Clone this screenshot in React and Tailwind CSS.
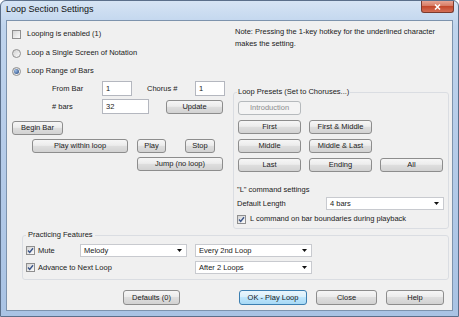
import React from "react";

const btnNormal =
  "border-[#8d8d8d] bg-[linear-gradient(#f6f6f6,#ececec_45%,#dedede_50%,#d2d2d2)] text-[#1a1a1a]";
const btnBase =
  "h-[14px] shrink-0 flex items-center justify-center rounded-[3px] border leading-none";

function Btn({ className = "", children, disabled, primary }) {
  let look = btnNormal;
  if (disabled) look = "border-[#b6babd] bg-[#f4f4f4] text-[#8d8d8d]";
  if (primary)
    look =
      "border-[#3c7fb1] bg-[linear-gradient(#eaf6fd,#d9f0fc_45%,#bee6fd_50%,#a7d9f5)] text-[#1a1a1a]";
  return <div className={`${btnBase} ${look} ${className}`}>{children}</div>;
}

function Check({ checked }) {
  return (
    <span className="w-[9px] h-[9px] shrink-0 border border-[#8f8f8f] bg-[linear-gradient(135deg,#d4d4d4,#fbfbfb)] flex items-center justify-center">
      {checked && (
        <svg width="7" height="7" viewBox="0 0 7 7">
          <path d="M1 3.6 L2.7 5.4 L6 1.2" stroke="#3a5488" strokeWidth="1.4" fill="none" />
        </svg>
      )}
    </span>
  );
}

function Radio({ selected }) {
  return (
    <span className="w-[9px] h-[9px] shrink-0 rounded-full border border-[#8f8f8f] bg-[linear-gradient(135deg,#d0d0d0,#fcfcfc)] flex items-center justify-center">
      {selected && (
        <span className="w-[5px] h-[5px] rounded-full bg-[radial-gradient(circle_at_35%_35%,#9dbde6,#1b3f78)]" />
      )}
    </span>
  );
}

function Field({ className = "", children }) {
  return (
    <div className={`h-[15px] shrink-0 border border-[#b4b7bf] bg-white flex items-center pl-[3px] ${className}`}>
      {children}
    </div>
  );
}

function Combo({ className = "", children }) {
  return (
    <div className={`h-[13px] shrink-0 border border-[#c8cacf] bg-white flex items-center justify-between pl-[3px] pr-[4px] ${className}`}>
      <span>{children}</span>
      <svg width="5" height="3" viewBox="0 0 5 3">
        <path d="M0 0H5L2.5 3Z" fill="#111" />
      </svg>
    </div>
  );
}

export default function App() {
  return (
    <div className="w-[459px] h-[317px] flex flex-col overflow-hidden rounded-t-[6px] border border-[#5b6f8a] bg-[linear-gradient(180deg,#d6e4f4,#bfd4ed_8%,#b6cce9_45%,#a9c3e4)] font-['Liberation_Sans',Arial,sans-serif]">
      <div className="h-[19px] shrink-0 flex justify-between items-start">
        <span className="pl-[5px] pt-[3px] text-[9px] leading-[11px] text-[#111]">Loop Section Settings</span>
        <div className="mr-[4px] w-[33px] h-[12px] rounded-b-[3px] border border-t-0 border-[#7a3a2e] bg-[linear-gradient(#e8a493,#d67a63_45%,#c4482b_50%,#d46f57)] flex items-center justify-center">
          <svg width="7" height="6" viewBox="0 0 7 6">
            <path d="M1 0.5 L6 5.5 M6 0.5 L1 5.5" stroke="#fff" strokeWidth="1.5" />
          </svg>
        </div>
      </div>

      <div className="ml-[5px] mr-[5px] h-[291px] shrink-0 border border-[#7d93ad] bg-[#f0f0f0] flex flex-col text-[7.5px] leading-[10px] text-[#1a1a1a]">
        <div className="flex pt-[5px]">
          {/* left column */}
          <div className="ml-[5px] w-[214px] mt-[3px] flex flex-col">
            <div className="h-[10px] flex items-center gap-[6px]">
              <Check />
              <span>Looping is enabled (1)</span>
            </div>
            <div className="mt-[9px] h-[10px] flex items-center gap-[6px]">
              <Radio />
              <span>Loop a Single Screen of Notation</span>
            </div>
            <div className="mt-[8px] h-[10px] flex items-center gap-[6px]">
              <Radio selected />
              <span>Loop Range of Bars</span>
            </div>
            <div className="mt-[5px] h-[15px] flex items-center">
              <span className="ml-[40px] w-[50px]">From Bar</span>
              <Field className="w-[30px]">1</Field>
              <span className="ml-[15px] w-[48px]">Chorus #</span>
              <Field className="w-[30px]">1</Field>
            </div>
            <div className="mt-[3px] h-[15px] flex items-center">
              <span className="ml-[40px] w-[50px]">&#35; bars</span>
              <Field className="w-[47px]">32</Field>
              <Btn className="ml-[17px] w-[57px]">Update</Btn>
            </div>
            <div className="mt-[7px] flex">
              <Btn className="w-[51px]">Begin Bar</Btn>
            </div>
            <div className="mt-[4px] flex">
              <Btn className="ml-[20px] w-[96px]">Play within loop</Btn>
              <Btn className="ml-[9px] w-[29px]">Play</Btn>
              <Btn className="ml-[19px] w-[30px]">Stop</Btn>
            </div>
            <div className="mt-[4px] flex">
              <Btn className="ml-[125px] w-[86px]">Jump (no loop)</Btn>
            </div>
          </div>

          {/* right column */}
          <div className="ml-[7px] w-[215px] flex flex-col">
            <div className="pl-[2px] leading-[12px] whitespace-nowrap">
              Note: Pressing the 1-key hotkey for the underlined character
              <br />
              makes the setting.
            </div>
            <fieldset className="mt-[37px] border border-[#dadde2] rounded-[3px] pl-[3px] pr-[4px] pb-[4px]">
              <legend className="px-[1px] leading-[10px]">Loop Presets (Set to Choruses...)</legend>
              <div className="mt-[4px] flex">
                <Btn disabled className="ml-[1px] w-[63px]">Introduction</Btn>
              </div>
              <div className="mt-[5px] flex gap-[8px] ml-[1px]">
                <Btn className="w-[63px]">First</Btn>
                <Btn className="w-[63px]">First &amp; Middle</Btn>
              </div>
              <div className="mt-[5px] flex gap-[8px] ml-[1px]">
                <Btn className="w-[63px]">Middle</Btn>
                <Btn className="w-[63px]">Middle &amp; Last</Btn>
              </div>
              <div className="mt-[5px] flex gap-[8px] ml-[1px]">
                <Btn className="w-[63px]">Last</Btn>
                <Btn className="w-[63px]">Ending</Btn>
                <Btn className="w-[63px]">All</Btn>
              </div>
              <div className="mt-[13px]">&quot;L&quot; command settings</div>
              <div className="mt-[2px] h-[13px] flex items-center">
                <span className="w-[89px]">Default Length</span>
                <Combo className="w-[118px]">4 bars</Combo>
              </div>
              <div className="mt-[4px] h-[10px] flex items-center gap-[4px]">
                <Check checked />
                <span>L command on bar boundaries during playback</span>
              </div>
            </fieldset>
          </div>
        </div>

        <fieldset className="mt-[1px] ml-[15px] w-[427px] border border-[#dadde2] rounded-[3px] pl-[3px] pb-[5px]">
          <legend className="px-[2px] leading-[10px]">Practicing Features</legend>
          <div className="mt-[4px] h-[13px] flex items-center">
            <div className="w-[54px] flex items-center gap-[3px]">
              <Check checked />
              <span>Mute</span>
            </div>
            <Combo className="w-[107px]">Melody</Combo>
            <Combo className="ml-[8px] w-[117px]">Every 2nd Loop</Combo>
          </div>
          <div className="mt-[4px] h-[13px] flex items-center">
            <div className="w-[169px] flex items-center gap-[3px]">
              <Check checked />
              <span>Advance to Next Loop</span>
            </div>
            <Combo className="w-[117px]">After 2 Loops</Combo>
          </div>
        </fieldset>

        <div className="mt-[10px] flex">
          <Btn className="ml-[116px] w-[57px] h-[15px]">Defaults (0)</Btn>
          <Btn primary className="ml-[59px] w-[68px] h-[15px]">OK - Play Loop</Btn>
          <Btn className="ml-[9px] w-[61px] h-[15px]">Close</Btn>
          <Btn className="ml-[9px] w-[58px] h-[15px]">Help</Btn>
        </div>
      </div>
    </div>
  );
}
